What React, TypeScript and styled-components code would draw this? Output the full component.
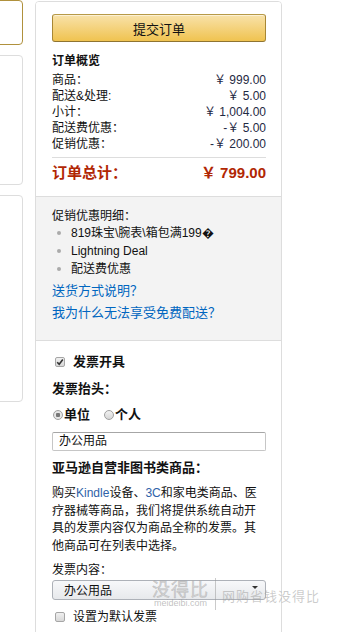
import React from 'react'
import styled, { createGlobalStyle } from 'styled-components'

const GlobalStyle = createGlobalStyle`
  body {
    margin: 0;
    background: #fff;
    font-family: 'Liberation Sans', Arial, 'Noto Sans CJK SC', sans-serif;
    font-size: 12px;
    color: #111;
  }
`

const Page = styled.div`
  display: flex;
  align-items: flex-start;
  gap: 12px;
  height: 632px;
  overflow: hidden;
  position: relative;
`

const LeftCol = styled.div`
  margin-left: -10px;
  width: 33px;
  display: flex;
  flex-direction: column;
  gap: 10px;
`

const SideBox = styled.div<{ $h: number; $gold?: boolean }>`
  height: ${(p) => p.$h}px;
  box-sizing: border-box;
  border: 1px solid ${(p) => (p.$gold ? '#b0913d' : '#ddd')};
  border-radius: 4px;
  background: #fff;
`

const Panel = styled.div`
  width: 247px;
  box-sizing: border-box;
  margin-top: 1px;
  border: 1px solid #ddd;
  border-radius: 4px;
  overflow: hidden;
  flex-shrink: 0;
`

const Section = styled.div<{ $gray?: boolean; $pt: number; $pb: number }>`
  padding: ${(p) => p.$pt}px 15px ${(p) => p.$pb}px 16px;
  background: ${(p) => (p.$gray ? '#f3f3f3' : '#fff')};
  & + & {
    border-top: 1px solid #ddd;
  }
`

const SubmitButton = styled.div`
  height: 28px;
  box-sizing: border-box;
  border: 1px solid;
  border-color: #b79a48 #a88734 #8f7431;
  border-radius: 3px;
  background: linear-gradient(to bottom, #f8e2aa, #f0c350);
  box-shadow: inset 0 1px 0 rgba(255, 255, 255, 0.5);
  display: flex;
  align-items: center;
  justify-content: center;
  font-size: 13px;
  color: #111;
`

const Heading = styled.div<{ $mt: number }>`
  margin-top: ${(p) => p.$mt}px;
  font-weight: bold;
  line-height: 16px;
  color: #111;
`

const Rows = styled.div`
  margin-top: 3px;
`

const Row = styled.div`
  display: flex;
  justify-content: space-between;
  line-height: 16px;
  color: #111;
`

const Amount = styled.span`
  color: #1f2a44;
`

const Divider = styled.div`
  margin-top: 5px;
  height: 1px;
  background: #ddd;
`

const TotalRow = styled.div`
  display: flex;
  justify-content: space-between;
  padding-top: 4px;
  line-height: 22px;
  font-size: 15px;
  font-weight: bold;
  color: #b12704;
`

const PromoList = styled.ul`
  list-style: none;
  margin: 0;
  padding: 0;
`

const PromoItem = styled.li`
  position: relative;
  padding-left: 19px;
  line-height: 18px;
  color: #111;
  &::before {
    content: '';
    position: absolute;
    left: 5px;
    top: 7px;
    width: 4px;
    height: 4px;
    border-radius: 50%;
    background: #aaa;
  }
`

const Link = styled.a`
  display: block;
  margin-top: 4px;
  line-height: 18px;
  font-size: 13px;
  color: #0066c0;
  text-decoration: none;
`

const CheckRow = styled.div<{ $mt: number; $bold?: boolean }>`
  margin-top: ${(p) => p.$mt}px;
  display: flex;
  align-items: center;
  gap: 8px;
  padding-left: 3px;
  line-height: 18px;
  font-weight: ${(p) => (p.$bold ? 'bold' : 'normal')};
  font-size: ${(p) => (p.$bold ? '13px' : '12px')};
  color: #111;
`

const Box = styled.span<{ $checked?: boolean }>`
  width: 10px;
  height: 10px;
  box-sizing: border-box;
  border: 1px solid #a6a6a6;
  border-radius: 2px;
  background: linear-gradient(to bottom, #f0f0f0, #d8d8d8);
  display: flex;
  align-items: center;
  justify-content: center;
`

const Label = styled.div<{ $mt: number }>`
  margin-top: ${(p) => p.$mt}px;
  line-height: 18px;
  font-weight: bold;
  font-size: 13px;
  color: #111;
`

const RadioRow = styled.div`
  margin-top: 8px;
  display: flex;
  align-items: center;
  gap: 13px;
  line-height: 18px;
  font-size: 13px;
  font-weight: bold;
  color: #111;
`

const RadioOption = styled.span`
  display: flex;
  align-items: center;
  gap: 1px;
  padding-left: 1px;
`

const RadioDot = styled.span<{ $checked?: boolean }>`
  width: 10px;
  height: 10px;
  box-sizing: border-box;
  border: 1px solid #a0a0a0;
  border-radius: 50%;
  background: ${(p) =>
    p.$checked
      ? 'radial-gradient(circle, #777 0 2px, #e6e6e6 2.5px)'
      : 'linear-gradient(to bottom, #f2f2f2, #d6d6d6)'};
`

const TextInput = styled.div`
  margin-top: 8px;
  height: 19px;
  box-sizing: border-box;
  border: 1px solid #c6c6c6;
  border-top-color: #a6a6a6;
  border-radius: 2px;
  padding-left: 6px;
  line-height: 17px;
  font-size: 12px;
  color: #111;
  background: #fff;
`

const Paragraph = styled.p`
  margin: 8px 0 0;
  line-height: 17.7px;
  color: #111;
`

const Blue = styled.span`
  color: #2f62a8;
`

const PlainLabel = styled.div`
  margin-top: 5px;
  line-height: 18px;
  color: #111;
`

const SelectBox = styled.div`
  margin-top: 1px;
  height: 20px;
  box-sizing: border-box;
  border: 1px solid #adb1b8;
  border-radius: 3px;
  background: linear-gradient(to bottom, #f7f8fa, #e7e9ec);
  display: flex;
  align-items: center;
  justify-content: space-between;
  padding: 0 7px 0 11px;
  font-size: 12px;
  color: #111;
`

const Caret = styled.span`
  width: 0;
  height: 0;
  border-left: 3px solid transparent;
  border-right: 3px solid transparent;
  border-top: 3px solid #333;
  margin-top: -4px;
`

const Watermark = styled.div`
  position: absolute;
  left: 152px;
  top: 578px;
  display: flex;
  align-items: flex-start;
  gap: 6px;
  pointer-events: none;
  color: rgba(160, 160, 160, 0.55);
  font-family: 'Noto Sans CJK SC', sans-serif;
`

const MarkMain = styled.div`
  display: flex;
  flex-direction: column;
  align-items: center;
`

const MarkBig = styled.span`
  font-size: 18px;
  line-height: 20px;
  letter-spacing: 1px;
  color: rgba(200, 200, 200, 0.7);
  -webkit-text-stroke: 0.5px rgba(150, 150, 150, 0.5);
`

const MarkSmall = styled.span`
  font-family: 'Liberation Sans', sans-serif;
  font-size: 9px;
  line-height: 10px;
  color: rgba(150, 150, 150, 0.6);
`

const MarkBar = styled.span`
  width: 1px;
  height: 32px;
  background: rgba(150, 150, 150, 0.5);
`

const MarkSlogan = styled.span`
  margin-top: 10px;
  font-size: 13px;
  line-height: 16px;
  letter-spacing: 1px;
  color: rgba(160, 160, 160, 0.55);
`

const rows: [string, string][] = [
  ['商品：', '￥ 999.00'],
  ['配送&处理:', '￥ 5.00'],
  ['小计：', '￥ 1,004.00'],
  ['配送费优惠：', '-￥ 5.00'],
  ['促销优惠：', '-￥ 200.00'],
]

const Check = () => (
  <svg width="8" height="8" viewBox="0 0 8 8">
    <path d="M1.2 4.2 L3.2 6.2 L6.8 1.6" fill="none" stroke="#333" strokeWidth="1.6" />
  </svg>
)

const App: React.FC = () => {
  return (
    <>
      <GlobalStyle />
      <Page>
        <LeftCol>
          <SideBox $h={45} $gold />
          <SideBox $h={130} />
          <SideBox $h={207} />
        </LeftCol>

        <Panel>
          <Section $pt={12} $pb={12}>
            <SubmitButton>提交订单</SubmitButton>
            <Heading $mt={11}>订单概览</Heading>
            <Rows>
              {rows.map(([label, value]) => (
                <Row key={label}>
                  <span>{label}</span>
                  <Amount>{value}</Amount>
                </Row>
              ))}
            </Rows>
            <Divider />
            <TotalRow>
              <span>订单总计：</span>
              <span>￥ 799.00</span>
            </TotalRow>
          </Section>

          <Section $gray $pt={11} $pb={18}>
            <Heading $mt={0} style={{ fontWeight: 'normal' }}>
              促销优惠明细：
            </Heading>
            <PromoList>
              <PromoItem>{'819珠宝\\腕表\\箱包满199\uFFFD'}</PromoItem>
              <PromoItem>Lightning Deal</PromoItem>
              <PromoItem>配送费优惠</PromoItem>
            </PromoList>
            <Link href="#">送货方式说明？</Link>
            <Link href="#">我为什么无法享受免费配送？</Link>
          </Section>

          <Section $pt={12} $pb={20}>
            <CheckRow $mt={0} $bold>
              <Box $checked>
                <Check />
              </Box>
              发票开具
            </CheckRow>
            <Label $mt={9}>发票抬头：</Label>
            <RadioRow>
              <RadioOption>
                <RadioDot $checked />
                单位
              </RadioOption>
              <RadioOption>
                <RadioDot />
                个人
              </RadioOption>
            </RadioRow>
            <TextInput>办公用品</TextInput>
            <Label $mt={8}>亚马逊自营非图书类商品：</Label>
            <Paragraph>
              购买<Blue>Kindle</Blue>设备、<Blue>3C</Blue>和家电类商品、医疗器械等商品，我们将提供系统自动开具的发票内容仅为商品全称的发票。其他商品可在列表中选择。
            </Paragraph>
            <PlainLabel>发票内容：</PlainLabel>
            <SelectBox>
              <span>办公用品</span>
              <Caret />
            </SelectBox>
            <CheckRow $mt={8}>
              <Box />
              设置为默认发票
            </CheckRow>
          </Section>
        </Panel>

        <Watermark>
          <MarkMain>
            <MarkBig>没得比</MarkBig>
            <MarkSmall>meideibi.com</MarkSmall>
          </MarkMain>
          <MarkBar />
          <MarkSlogan>网购省钱没得比</MarkSlogan>
        </Watermark>
      </Page>
    </>
  )
}

export default App
